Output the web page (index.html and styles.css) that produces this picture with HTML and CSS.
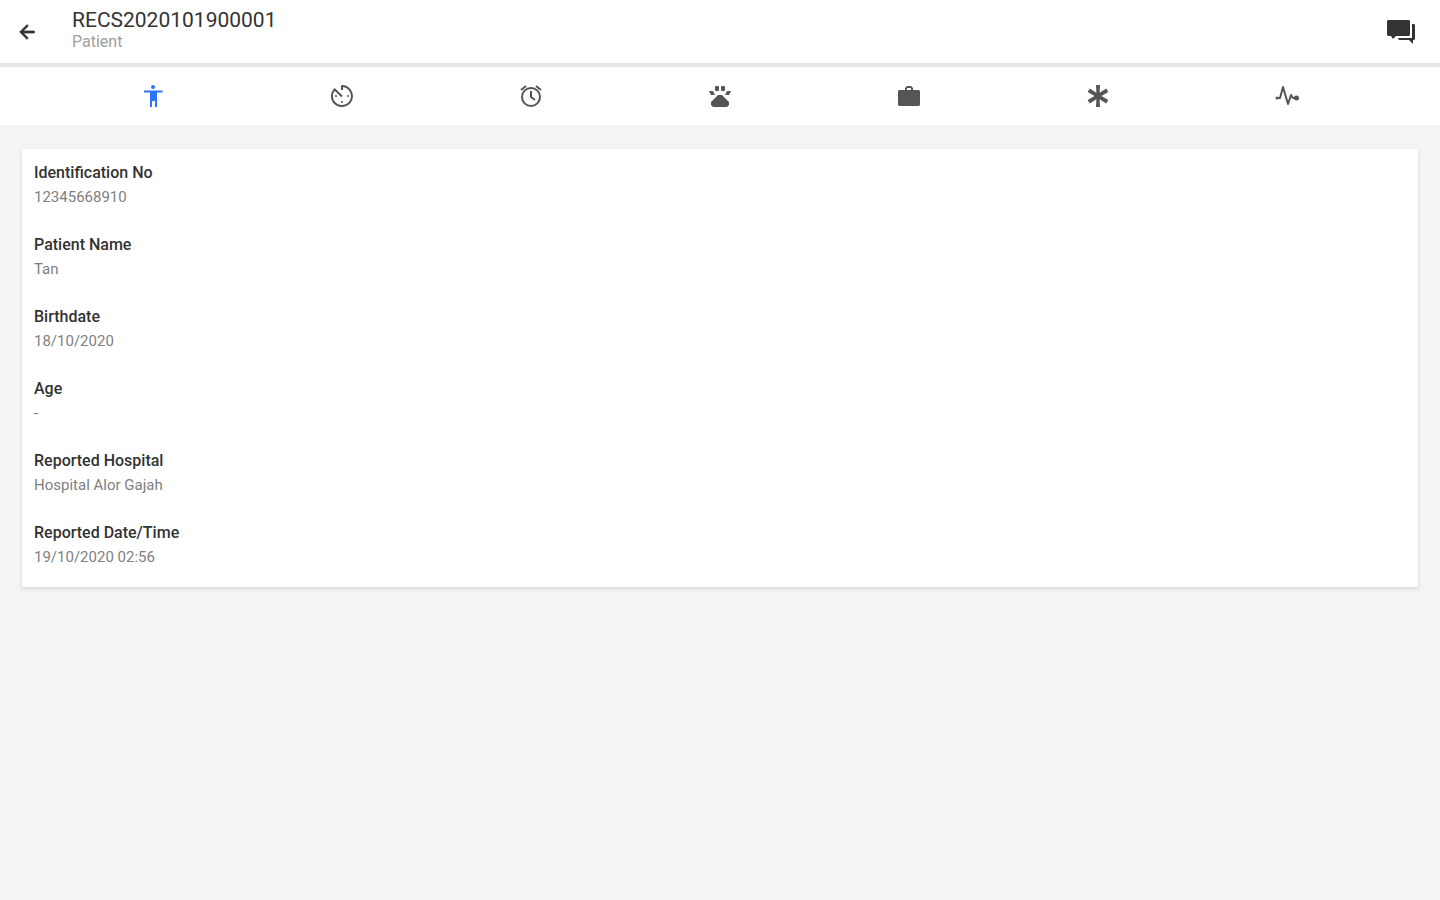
FILE: index.html
```
<!DOCTYPE html>
<html lang="en">
<head>
    <meta charset="UTF-8">
    <meta name="viewport" content="width=device-width, initial-scale=1.0">
    <title>Patient</title>
    <link rel="stylesheet" href="styles.css">
</head>
<body>
    <header class="toolbar">
        <button type="button" class="icon-button" aria-label="Back">
            <svg class="back-icon" viewBox="0 0 24 24"><path d="M20 11H7.8l5.6-5.6L12 4l-8 8 8 8 1.4-1.4L7.8 13H20z" stroke="currentColor"/></svg>
        </button>
        <div class="heading">
            <h1 class="title">RECS2020101900001</h1>
            <p class="subtitle">Patient</p>
        </div>
        <button type="button" class="icon-button" aria-label="Messages">
            <svg class="chat-icon" viewBox="0 0 30 26"><path d="M2 1h21l1 1v14l-1 1H10l-3 3-2-3H2l-1-1V2z"/><path d="M26 5h2l1 1v14l-1 1h-1v4l-4-4H13l-1-2h14z"/></svg>
        </button>
    </header>

    <nav class="tabs">
        <button type="button" class="tab active" aria-label="Patient">
            <svg viewBox="0 0 24 24"><circle cx="12" cy="3" r="2"/><path d="M21.500 8.500H16V23h-2v-6h-3v6H9V8.500H3v-2h18.500z"/></svg>
        </button>
        <button type="button" class="tab" aria-label="Timer">
            <svg viewBox="0 0 24 24"><path class="line" d="M12 6V2a10 10 0 1 1-7.500 3.300L12 12.500"/><circle cx="12" cy="18" r="1"/><circle cx="18" cy="12" r="1"/><circle cx="6" cy="12" r="1"/></svg>
        </button>
        <button type="button" class="tab" aria-label="Alarm">
            <svg viewBox="0 0 24 24"><circle class="line" cx="12" cy="13" r="9"/><path class="line" d="M12 7v6l4 3M2 6l5-4M22 6l-5-4"/></svg>
        </button>
        <button type="button" class="tab" aria-label="Animal contact">
            <svg viewBox="0 0 24 24"><rect x="7" y="2" width="4" height="5" rx="1"/><rect x="13" y="2" width="4" height="5" rx="1"/><path d="M1 7h4l2 4H3zM23 7h-4l-2 4h4zM10 11h4l7 7v3l-2 2H5l-2-2v-3z"/></svg>
        </button>
        <button type="button" class="tab" aria-label="Occupation">
            <svg viewBox="0 0 24 24"><path d="M22 6h-6V4l-2-2h-4L8 4v2H2L1 7v14l1 1h20l1-1V7zm-8 0h-4V4h4z"/></svg>
        </button>
        <button type="button" class="tab" aria-label="Symptoms">
            <svg viewBox="0 0 24 24"><path d="M10 1h4l-.4 7.800 6.700-4.300 2 3.500L15.500 12l6.800 4-2 3.500-6.700-4.300L14 23h-4l.4-7.800-6.700 4.300-2-3.500 6.800-4-6.800-4 2-3.500 6.700 4.300z"/></svg>
        </button>
        <button type="button" class="tab" aria-label="Vitals">
            <svg viewBox="0 0 24 24"><path class="line" d="M1 14h4L8 3l5 17 3-9 2 3h3"/><circle cx="2" cy="14" r="1.500"/><circle cx="21.500" cy="14" r="2.500"/></svg>
        </button>
    </nav>

    <main>
        <dl class="card">
            <div class="field">
                <dt>Identification No</dt>
                <dd>12345668910</dd>
            </div>
            <div class="field">
                <dt>Patient Name</dt>
                <dd>Tan</dd>
            </div>
            <div class="field">
                <dt>Birthdate</dt>
                <dd>18/10/2020</dd>
            </div>
            <div class="field">
                <dt>Age</dt>
                <dd>-</dd>
            </div>
            <div class="field">
                <dt>Reported Hospital</dt>
                <dd>Hospital Alor Gajah</dd>
            </div>
            <div class="field">
                <dt>Reported Date/Time</dt>
                <dd>19/10/2020 02:56</dd>
            </div>
        </dl>
    </main>
</body>
</html>
```
FILE: styles.css
```
body {
    margin: 0;
    background-color: #f4f4f4;
    font-family: Roboto, "Liberation Sans", sans-serif;
}
button {
    padding: 0;
    border: none;
    background: none;
    color: #333333;
    cursor: pointer;
}
svg {
    display: block;
    width: 24px;
    height: 24px;
    fill: currentColor;
}
.line {
    fill: none;
    stroke: currentColor;
    stroke-width: 2;
    stroke-linejoin: round;
}
.toolbar {
    display: flex;
    align-items: center;
    padding: 8px 24px 8px 16px;
    background-color: #ffffff;
    border-bottom: 4px solid #e6e6e6; /* Toolbar shadow */
}
.icon-button .back-icon {
    width: 22px;
    height: 22px;
}
.icon-button .chat-icon {
    width: 30px;
    height: 26px;
}
.heading {
    flex: 1;
    margin-left: 34px;
    padding-bottom: 3px;
}
.title {
    margin: 0;
    font-size: 21px;
    font-weight: 400;
    line-height: 24px;
    color: #333333;
}
.subtitle {
    margin: 0;
    font-size: 16px;
    line-height: 20px;
    color: #a0a0a0;
}
.tabs {
    display: flex;
    justify-content: space-evenly;
    background-color: #ffffff;
}
.tab {
    display: flex;
    align-items: center;
    justify-content: center;
    width: 72px;
    height: 58px;
    color: #555555;
}
.tab.active {
    color: #2f74ff; /* Selected tab */
}
.card {
    display: flex;
    flex-direction: column;
    gap: 24px;
    margin: 24px 22px;
    padding: 12px 12px 18px;
    background-color: #ffffff;
    box-shadow: 0 2px 3px 1px rgba(0, 0, 0, 0.08);
}
.field {
    line-height: 24px;
}
.field dt {
    font-size: 16px;
    font-weight: 500;
    color: #333333;
}
.field dd {
    margin: 0;
    font-size: 15px;
    color: #808080;
}
```
